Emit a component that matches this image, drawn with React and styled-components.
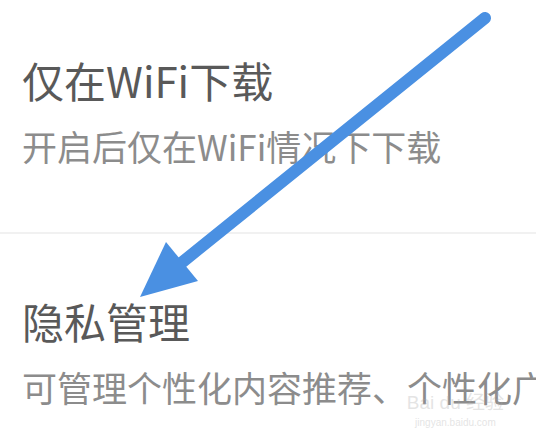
import styled, { createGlobalStyle } from "styled-components";

const GlobalStyle = createGlobalStyle`
  html, body {
    margin: 0;
    padding: 0;
    background: #ffffff;
  }
  body {
    font-family: "Noto Sans CJK SC", "Noto Sans", sans-serif;
  }
`;

const items = [
  { title: "仅在WiFi下载", desc: "开启后仅在WiFi情况下下载" },
  { title: "隐私管理", desc: "可管理个性化内容推荐、个性化广告推荐" },
];

const App = () => {
  return (
    <Page>
      <GlobalStyle />
      <SettingsList>
        {items.map((item, i) => (
          <SettingItem key={item.title} $last={i === items.length - 1}>
            <ItemTitle>{item.title}</ItemTitle>
            <ItemDesc>{item.desc}</ItemDesc>
          </SettingItem>
        ))}
      </SettingsList>
      <Watermark>
        <WatermarkLogo>Bai du 经验</WatermarkLogo>
        <WatermarkUrl>jingyan.baidu.com</WatermarkUrl>
      </Watermark>
      <ArrowLayer viewBox="0 0 536 440" width="536" height="440">
        <line
          x1="485"
          y1="18"
          x2="180"
          y2="264"
          stroke="#4a90e2"
          strokeWidth="12"
          strokeLinecap="round"
        />
        <polygon points="140,297 166,242 198,281" fill="#4a90e2" />
      </ArrowLayer>
    </Page>
  );
};

const Page = styled.div`
  position: relative;
  width: 536px;
  height: 440px;
  overflow: hidden;
  background: #ffffff;
`;

const SettingsList = styled.div`
  display: flex;
  flex-direction: column;
`;

const SettingItem = styled.div`
  display: flex;
  flex-direction: column;
  gap: 20px;
  padding: ${(p) => (p.$last ? "62px 0 0 22px" : "55px 0 65px 22px")};
  border-bottom: ${(p) => (p.$last ? "none" : "2px solid #f1f1f1")};
`;

const ItemTitle = styled.div`
  font-size: 42px;
  line-height: 50px;
  color: #595959;
  white-space: nowrap;
`;

const ItemDesc = styled.div`
  font-size: 35px;
  line-height: 42px;
  color: #8c8c8c;
  white-space: nowrap;
`;

const Watermark = styled.div`
  position: absolute;
  right: 32px;
  bottom: 12px;
  display: flex;
  flex-direction: column;
  align-items: center;
  gap: 4px;
  opacity: 0.3;
`;

const WatermarkLogo = styled.div`
  font-family: "Liberation Sans", "Noto Sans CJK SC", sans-serif;
  font-size: 19px;
  line-height: 20px;
  color: #a8a8a8;
  white-space: nowrap;
`;

const WatermarkUrl = styled.div`
  font-family: "Liberation Sans", sans-serif;
  font-size: 10px;
  color: #a8a8a8;
`;

const ArrowLayer = styled.svg`
  position: absolute;
  top: 0;
  left: 0;
  pointer-events: none;
`;

export default App;
